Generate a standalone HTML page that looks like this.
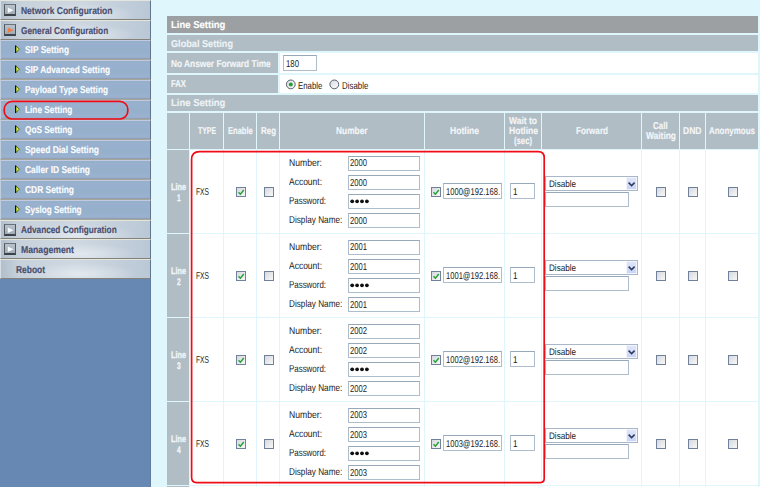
<!DOCTYPE html><html><head><meta charset="utf-8"><style>
*{box-sizing:border-box}
body{margin:0;width:760px;height:487px;overflow:hidden;position:relative;background:#dff6fc;font-family:"Liberation Sans",sans-serif}
.ab{position:absolute}
.cat{position:absolute;left:0;width:151px;height:20px;
 background:radial-gradient(ellipse 55px 11px at 80px 14px,rgba(230,236,242,.8),rgba(230,236,242,0)),linear-gradient(to right,#b2bfcc 0%,#c6d1db 12%,#cfd8e1 50%,#bac8d6 100%);
 border-bottom:1px solid #85827a;border-top:1px solid #e2e6dc;border-right:1px solid #62758d;border-left:1px solid #d8dee6}
.sub{position:absolute;left:0;width:151px;height:20px;background:linear-gradient(to bottom,#8fb2c6 0%,#9ab0cf 12%,#95b0cb 50%,#9ab2d0 90%,#8e9aac 100%);
 border-bottom:1px solid #a6a696;border-top:1px solid #c4c8e2;border-right:1px solid #62758d;border-left:1px solid #c0cede}
.t{position:absolute;white-space:nowrap;transform-origin:0 0;line-height:10px;text-rendering:geometricPrecision}
.ico{position:absolute;left:3px;top:3px;width:12px;height:12px;border:1px solid #4e565e;border-bottom:2px solid #3c434a;border-top-color:#6a727c;background:linear-gradient(#b8c2cc,#a2acb8)}
.cell{position:absolute;overflow:hidden}
.g{background:#b1bdc5}
.w{background:#fff}
.inp{position:absolute;background:#fff;border:1px solid #aebdcb;border-top-color:#97a8b8}
.cb{position:absolute;width:10px;height:10px;border:1px solid #71819b;background:linear-gradient(135deg,#d6dade,#f6f7f8)}
</style></head><body>

<div class="ab" style="left:0;top:0;width:151px;height:487px;background:#6888b4;border-right:1px solid #5f7b9f"></div>
<div class="cat" style="top:0px;height:20px">
<div class="ico"><svg width="10" height="10" style="position:absolute;left:0;top:0"><path d="M2.8 2.6 L8.6 5.3 L2.8 8.1Z" fill="#f6f8fa"/></svg></div>
</div>
<div class="cat" style="top:20px;height:20px">
<div class="ico"><svg width="10" height="10" style="position:absolute;left:0;top:0"><path d="M2.8 2.6 L8.6 5.3 L2.8 8.1Z" fill="#ee7d48"/></svg></div>
</div>
<div class="sub" style="top:40px"><svg width="7" height="10" style="position:absolute;left:13px;top:3px"><path d="M1.6 1.7 L5.4 5.2 L1.6 8.7Z" fill="#d4ee30" stroke="#4a5a30" stroke-width="0.8" stroke-linejoin="round"/><path d="M1.6 1.5 L1.6 8.9" stroke="#101408" stroke-width="1.2"/></svg></div>
<div class="sub" style="top:60px"><svg width="7" height="10" style="position:absolute;left:13px;top:3px"><path d="M1.6 1.7 L5.4 5.2 L1.6 8.7Z" fill="#d4ee30" stroke="#4a5a30" stroke-width="0.8" stroke-linejoin="round"/><path d="M1.6 1.5 L1.6 8.9" stroke="#101408" stroke-width="1.2"/></svg></div>
<div class="sub" style="top:80px"><svg width="7" height="10" style="position:absolute;left:13px;top:3px"><path d="M1.6 1.7 L5.4 5.2 L1.6 8.7Z" fill="#d4ee30" stroke="#4a5a30" stroke-width="0.8" stroke-linejoin="round"/><path d="M1.6 1.5 L1.6 8.9" stroke="#101408" stroke-width="1.2"/></svg></div>
<div class="sub" style="top:100px"><svg width="7" height="10" style="position:absolute;left:13px;top:3px"><path d="M1.6 1.7 L5.4 5.2 L1.6 8.7Z" fill="#d4ee30" stroke="#4a5a30" stroke-width="0.8" stroke-linejoin="round"/><path d="M1.6 1.5 L1.6 8.9" stroke="#101408" stroke-width="1.2"/></svg></div>
<div class="sub" style="top:120px"><svg width="7" height="10" style="position:absolute;left:13px;top:3px"><path d="M1.6 1.7 L5.4 5.2 L1.6 8.7Z" fill="#d4ee30" stroke="#4a5a30" stroke-width="0.8" stroke-linejoin="round"/><path d="M1.6 1.5 L1.6 8.9" stroke="#101408" stroke-width="1.2"/></svg></div>
<div class="sub" style="top:140px"><svg width="7" height="10" style="position:absolute;left:13px;top:3px"><path d="M1.6 1.7 L5.4 5.2 L1.6 8.7Z" fill="#d4ee30" stroke="#4a5a30" stroke-width="0.8" stroke-linejoin="round"/><path d="M1.6 1.5 L1.6 8.9" stroke="#101408" stroke-width="1.2"/></svg></div>
<div class="sub" style="top:160px"><svg width="7" height="10" style="position:absolute;left:13px;top:3px"><path d="M1.6 1.7 L5.4 5.2 L1.6 8.7Z" fill="#d4ee30" stroke="#4a5a30" stroke-width="0.8" stroke-linejoin="round"/><path d="M1.6 1.5 L1.6 8.9" stroke="#101408" stroke-width="1.2"/></svg></div>
<div class="sub" style="top:180px"><svg width="7" height="10" style="position:absolute;left:13px;top:3px"><path d="M1.6 1.7 L5.4 5.2 L1.6 8.7Z" fill="#d4ee30" stroke="#4a5a30" stroke-width="0.8" stroke-linejoin="round"/><path d="M1.6 1.5 L1.6 8.9" stroke="#101408" stroke-width="1.2"/></svg></div>
<div class="sub" style="top:200px"><svg width="7" height="10" style="position:absolute;left:13px;top:3px"><path d="M1.6 1.7 L5.4 5.2 L1.6 8.7Z" fill="#d4ee30" stroke="#4a5a30" stroke-width="0.8" stroke-linejoin="round"/><path d="M1.6 1.5 L1.6 8.9" stroke="#101408" stroke-width="1.2"/></svg></div>
<div class="cat" style="top:220px;height:19px">
<div class="ico"><svg width="10" height="10" style="position:absolute;left:0;top:0"><path d="M2.8 2.6 L8.6 5.3 L2.8 8.1Z" fill="#f6f8fa"/></svg></div>
</div>
<div class="cat" style="top:239px;height:20px">
<div class="ico"><svg width="10" height="10" style="position:absolute;left:0;top:0"><path d="M2.8 2.6 L8.6 5.3 L2.8 8.1Z" fill="#f6f8fa"/></svg></div>
</div>
<div class="cat" style="top:259px;height:20px">
</div>
<svg class="ab" style="left:0;top:96px" width="140" height="28"><rect x="4.2" y="5.4" width="123.6" height="17.6" rx="8" ry="8" fill="none" stroke="#ee0c18" stroke-width="1.7"/></svg>
<div class="cell " style="left:167px;top:16px;width:591px;height:17px;background:#9ca0a3"></div>
<div class="cell g" style="left:167px;top:35px;width:591px;height:16px;"></div>
<div class="cell g" style="left:167px;top:53px;width:111px;height:20px;"></div>
<div class="cell w" style="left:280px;top:53px;width:478px;height:20px;"></div>
<div class="inp" style="left:283px;top:55px;width:34px;height:16px"></div>
<div class="cell g" style="left:167px;top:75px;width:111px;height:18px;"></div>
<div class="cell w" style="left:280px;top:75px;width:478px;height:18px;"></div>
<svg class="ab" style="left:285px;top:79px" width="12" height="12"><defs><linearGradient id="rg" x1="0" y1="0" x2="1" y2="1"><stop offset="0" stop-color="#d8dde2"/><stop offset="1" stop-color="#fafbfc"/></linearGradient></defs><circle cx="5.8" cy="5.4" r="4.4" fill="url(#rg)" stroke="#56606c" stroke-width="1"/><circle cx="5.8" cy="5.4" r="2" fill="#22a032"/></svg>
<svg class="ab" style="left:329px;top:79px" width="12" height="12"><circle cx="5.3" cy="5.4" r="4.4" fill="url(#rg)" stroke="#56606c" stroke-width="1"/></svg>
<div class="cell g" style="left:167px;top:95px;width:591px;height:16px;"></div>
<div class="cell g" style="left:167px;top:113px;width:22px;height:36px;"></div>
<div class="cell g" style="left:190px;top:113px;width:33px;height:36px;"></div>
<div class="cell g" style="left:224px;top:113px;width:32px;height:36px;"></div>
<div class="cell g" style="left:257px;top:113px;width:22px;height:36px;"></div>
<div class="cell g" style="left:280px;top:113px;width:144px;height:36px;"></div>
<div class="cell g" style="left:425px;top:113px;width:79px;height:36px;"></div>
<div class="cell g" style="left:505px;top:113px;width:36px;height:36px;"></div>
<div class="cell g" style="left:542px;top:113px;width:99px;height:36px;"></div>
<div class="cell g" style="left:642px;top:113px;width:37px;height:36px;"></div>
<div class="cell g" style="left:680px;top:113px;width:25px;height:36px;"></div>
<div class="cell g" style="left:706px;top:113px;width:52px;height:36px;"></div>
<div class="cell g" style="left:167px;top:150px;width:22px;height:83px;"></div>
<div class="cell w" style="left:190px;top:150px;width:33px;height:83px;"></div>
<div class="cell w" style="left:224px;top:150px;width:32px;height:83px;"></div>
<div class="cell w" style="left:257px;top:150px;width:22px;height:83px;"></div>
<div class="cell w" style="left:280px;top:150px;width:144px;height:83px;"></div>
<div class="cell w" style="left:425px;top:150px;width:79px;height:83px;"></div>
<div class="cell w" style="left:505px;top:150px;width:36px;height:83px;"></div>
<div class="cell w" style="left:542px;top:150px;width:99px;height:83px;"></div>
<div class="cell w" style="left:642px;top:150px;width:37px;height:83px;"></div>
<div class="cell w" style="left:680px;top:150px;width:25px;height:83px;"></div>
<div class="cell w" style="left:706px;top:150px;width:52px;height:83px;"></div>
<div class="cb" style="left:236px;top:187px"><svg width="8" height="8" style="position:absolute;left:0;top:0"><path d="M1.5 4.3 L3.4 6.2 L6.8 2" fill="none" stroke="#22a02e" stroke-width="1.4"/></svg></div>
<div class="cb" style="left:264px;top:187px"></div>
<div class="inp" style="left:348px;top:156px;width:72px;height:15px"></div>
<div class="inp" style="left:348px;top:175px;width:72px;height:15px"></div>
<div class="inp" style="left:348px;top:194px;width:72px;height:15px"></div>
<svg class="ab" style="left:350px;top:198px" width="22" height="7"><circle cx="2.2" cy="3.3" r="1.9" fill="#111"/><circle cx="7.1000000000000005" cy="3.3" r="1.9" fill="#111"/><circle cx="12.0" cy="3.3" r="1.9" fill="#111"/><circle cx="16.900000000000002" cy="3.3" r="1.9" fill="#111"/></svg>
<div class="inp" style="left:348px;top:213px;width:72px;height:15px"></div>
<div class="cb" style="left:431px;top:187px"><svg width="8" height="8" style="position:absolute;left:0;top:0"><path d="M1.5 4.3 L3.4 6.2 L6.8 2" fill="none" stroke="#22a02e" stroke-width="1.4"/></svg></div>
<div class="inp" style="left:443px;top:183px;width:59px;height:16px"></div>
<div class="inp" style="left:510px;top:183px;width:25px;height:16px"></div>
<div class="inp" style="left:545px;top:176px;width:93px;height:15px;border-color:#a9b8c8"><div style="position:absolute;right:0;top:0;width:11px;height:13px;background:linear-gradient(#dfe5fb,#c9d5f5);border:1px solid #f2f5fc"><svg width="11" height="13" style="position:absolute;left:0;top:0"><path d="M1.6 4.6 L4.6 7.6 L7.6 4.6" fill="none" stroke="#2c3a5c" stroke-width="1.5"/></svg></div></div>
<div class="inp" style="left:545px;top:192px;width:84px;height:15px"></div>
<div class="cb" style="left:656px;top:187px"></div>
<div class="cb" style="left:688px;top:187px"></div>
<div class="cb" style="left:728px;top:187px"></div>
<div class="cell g" style="left:167px;top:234px;width:22px;height:83px;"></div>
<div class="cell w" style="left:190px;top:234px;width:33px;height:83px;"></div>
<div class="cell w" style="left:224px;top:234px;width:32px;height:83px;"></div>
<div class="cell w" style="left:257px;top:234px;width:22px;height:83px;"></div>
<div class="cell w" style="left:280px;top:234px;width:144px;height:83px;"></div>
<div class="cell w" style="left:425px;top:234px;width:79px;height:83px;"></div>
<div class="cell w" style="left:505px;top:234px;width:36px;height:83px;"></div>
<div class="cell w" style="left:542px;top:234px;width:99px;height:83px;"></div>
<div class="cell w" style="left:642px;top:234px;width:37px;height:83px;"></div>
<div class="cell w" style="left:680px;top:234px;width:25px;height:83px;"></div>
<div class="cell w" style="left:706px;top:234px;width:52px;height:83px;"></div>
<div class="cb" style="left:236px;top:271px"><svg width="8" height="8" style="position:absolute;left:0;top:0"><path d="M1.5 4.3 L3.4 6.2 L6.8 2" fill="none" stroke="#22a02e" stroke-width="1.4"/></svg></div>
<div class="cb" style="left:264px;top:271px"></div>
<div class="inp" style="left:348px;top:240px;width:72px;height:15px"></div>
<div class="inp" style="left:348px;top:259px;width:72px;height:15px"></div>
<div class="inp" style="left:348px;top:278px;width:72px;height:15px"></div>
<svg class="ab" style="left:350px;top:282px" width="22" height="7"><circle cx="2.2" cy="3.3" r="1.9" fill="#111"/><circle cx="7.1000000000000005" cy="3.3" r="1.9" fill="#111"/><circle cx="12.0" cy="3.3" r="1.9" fill="#111"/><circle cx="16.900000000000002" cy="3.3" r="1.9" fill="#111"/></svg>
<div class="inp" style="left:348px;top:297px;width:72px;height:15px"></div>
<div class="cb" style="left:431px;top:271px"><svg width="8" height="8" style="position:absolute;left:0;top:0"><path d="M1.5 4.3 L3.4 6.2 L6.8 2" fill="none" stroke="#22a02e" stroke-width="1.4"/></svg></div>
<div class="inp" style="left:443px;top:267px;width:59px;height:16px"></div>
<div class="inp" style="left:510px;top:267px;width:25px;height:16px"></div>
<div class="inp" style="left:545px;top:260px;width:93px;height:15px;border-color:#a9b8c8"><div style="position:absolute;right:0;top:0;width:11px;height:13px;background:linear-gradient(#dfe5fb,#c9d5f5);border:1px solid #f2f5fc"><svg width="11" height="13" style="position:absolute;left:0;top:0"><path d="M1.6 4.6 L4.6 7.6 L7.6 4.6" fill="none" stroke="#2c3a5c" stroke-width="1.5"/></svg></div></div>
<div class="inp" style="left:545px;top:276px;width:84px;height:15px"></div>
<div class="cb" style="left:656px;top:271px"></div>
<div class="cb" style="left:688px;top:271px"></div>
<div class="cb" style="left:728px;top:271px"></div>
<div class="cell g" style="left:167px;top:318px;width:22px;height:83px;"></div>
<div class="cell w" style="left:190px;top:318px;width:33px;height:83px;"></div>
<div class="cell w" style="left:224px;top:318px;width:32px;height:83px;"></div>
<div class="cell w" style="left:257px;top:318px;width:22px;height:83px;"></div>
<div class="cell w" style="left:280px;top:318px;width:144px;height:83px;"></div>
<div class="cell w" style="left:425px;top:318px;width:79px;height:83px;"></div>
<div class="cell w" style="left:505px;top:318px;width:36px;height:83px;"></div>
<div class="cell w" style="left:542px;top:318px;width:99px;height:83px;"></div>
<div class="cell w" style="left:642px;top:318px;width:37px;height:83px;"></div>
<div class="cell w" style="left:680px;top:318px;width:25px;height:83px;"></div>
<div class="cell w" style="left:706px;top:318px;width:52px;height:83px;"></div>
<div class="cb" style="left:236px;top:355px"><svg width="8" height="8" style="position:absolute;left:0;top:0"><path d="M1.5 4.3 L3.4 6.2 L6.8 2" fill="none" stroke="#22a02e" stroke-width="1.4"/></svg></div>
<div class="cb" style="left:264px;top:355px"></div>
<div class="inp" style="left:348px;top:324px;width:72px;height:15px"></div>
<div class="inp" style="left:348px;top:343px;width:72px;height:15px"></div>
<div class="inp" style="left:348px;top:362px;width:72px;height:15px"></div>
<svg class="ab" style="left:350px;top:366px" width="22" height="7"><circle cx="2.2" cy="3.3" r="1.9" fill="#111"/><circle cx="7.1000000000000005" cy="3.3" r="1.9" fill="#111"/><circle cx="12.0" cy="3.3" r="1.9" fill="#111"/><circle cx="16.900000000000002" cy="3.3" r="1.9" fill="#111"/></svg>
<div class="inp" style="left:348px;top:381px;width:72px;height:15px"></div>
<div class="cb" style="left:431px;top:355px"><svg width="8" height="8" style="position:absolute;left:0;top:0"><path d="M1.5 4.3 L3.4 6.2 L6.8 2" fill="none" stroke="#22a02e" stroke-width="1.4"/></svg></div>
<div class="inp" style="left:443px;top:351px;width:59px;height:16px"></div>
<div class="inp" style="left:510px;top:351px;width:25px;height:16px"></div>
<div class="inp" style="left:545px;top:344px;width:93px;height:15px;border-color:#a9b8c8"><div style="position:absolute;right:0;top:0;width:11px;height:13px;background:linear-gradient(#dfe5fb,#c9d5f5);border:1px solid #f2f5fc"><svg width="11" height="13" style="position:absolute;left:0;top:0"><path d="M1.6 4.6 L4.6 7.6 L7.6 4.6" fill="none" stroke="#2c3a5c" stroke-width="1.5"/></svg></div></div>
<div class="inp" style="left:545px;top:360px;width:84px;height:15px"></div>
<div class="cb" style="left:656px;top:355px"></div>
<div class="cb" style="left:688px;top:355px"></div>
<div class="cb" style="left:728px;top:355px"></div>
<div class="cell g" style="left:167px;top:402px;width:22px;height:83px;"></div>
<div class="cell w" style="left:190px;top:402px;width:33px;height:83px;"></div>
<div class="cell w" style="left:224px;top:402px;width:32px;height:83px;"></div>
<div class="cell w" style="left:257px;top:402px;width:22px;height:83px;"></div>
<div class="cell w" style="left:280px;top:402px;width:144px;height:83px;"></div>
<div class="cell w" style="left:425px;top:402px;width:79px;height:83px;"></div>
<div class="cell w" style="left:505px;top:402px;width:36px;height:83px;"></div>
<div class="cell w" style="left:542px;top:402px;width:99px;height:83px;"></div>
<div class="cell w" style="left:642px;top:402px;width:37px;height:83px;"></div>
<div class="cell w" style="left:680px;top:402px;width:25px;height:83px;"></div>
<div class="cell w" style="left:706px;top:402px;width:52px;height:83px;"></div>
<div class="cb" style="left:236px;top:439px"><svg width="8" height="8" style="position:absolute;left:0;top:0"><path d="M1.5 4.3 L3.4 6.2 L6.8 2" fill="none" stroke="#22a02e" stroke-width="1.4"/></svg></div>
<div class="cb" style="left:264px;top:439px"></div>
<div class="inp" style="left:348px;top:408px;width:72px;height:15px"></div>
<div class="inp" style="left:348px;top:427px;width:72px;height:15px"></div>
<div class="inp" style="left:348px;top:446px;width:72px;height:15px"></div>
<svg class="ab" style="left:350px;top:450px" width="22" height="7"><circle cx="2.2" cy="3.3" r="1.9" fill="#111"/><circle cx="7.1000000000000005" cy="3.3" r="1.9" fill="#111"/><circle cx="12.0" cy="3.3" r="1.9" fill="#111"/><circle cx="16.900000000000002" cy="3.3" r="1.9" fill="#111"/></svg>
<div class="inp" style="left:348px;top:465px;width:72px;height:15px"></div>
<div class="cb" style="left:431px;top:439px"><svg width="8" height="8" style="position:absolute;left:0;top:0"><path d="M1.5 4.3 L3.4 6.2 L6.8 2" fill="none" stroke="#22a02e" stroke-width="1.4"/></svg></div>
<div class="inp" style="left:443px;top:435px;width:59px;height:16px"></div>
<div class="inp" style="left:510px;top:435px;width:25px;height:16px"></div>
<div class="inp" style="left:545px;top:428px;width:93px;height:15px;border-color:#a9b8c8"><div style="position:absolute;right:0;top:0;width:11px;height:13px;background:linear-gradient(#dfe5fb,#c9d5f5);border:1px solid #f2f5fc"><svg width="11" height="13" style="position:absolute;left:0;top:0"><path d="M1.6 4.6 L4.6 7.6 L7.6 4.6" fill="none" stroke="#2c3a5c" stroke-width="1.5"/></svg></div></div>
<div class="inp" style="left:545px;top:444px;width:84px;height:15px"></div>
<div class="cb" style="left:656px;top:439px"></div>
<div class="cb" style="left:688px;top:439px"></div>
<div class="cb" style="left:728px;top:439px"></div>
<div class="cell g" style="left:167px;top:486px;width:22px;height:21px;"></div>
<div class="cell w" style="left:190px;top:486px;width:33px;height:21px;"></div>
<div class="cell w" style="left:224px;top:486px;width:32px;height:21px;"></div>
<div class="cell w" style="left:257px;top:486px;width:22px;height:21px;"></div>
<div class="cell w" style="left:280px;top:486px;width:144px;height:21px;"></div>
<div class="cell w" style="left:425px;top:486px;width:79px;height:21px;"></div>
<div class="cell w" style="left:505px;top:486px;width:36px;height:21px;"></div>
<div class="cell w" style="left:542px;top:486px;width:99px;height:21px;"></div>
<div class="cell w" style="left:642px;top:486px;width:37px;height:21px;"></div>
<div class="cell w" style="left:680px;top:486px;width:25px;height:21px;"></div>
<div class="cell w" style="left:706px;top:486px;width:52px;height:21px;"></div>
<svg class="ab" style="left:0;top:0" width="760" height="487"><path d="M199.6 151.6 L538.2 151.6 Q544.2 151.6 544.2 157.6 L544.2 478.6 Q544.2 482.6 540.2 482.6 L196.6 482.6 Q191.6 482.6 191.6 477.6 L191.6 159.6 Q191.6 151.6 199.6 151.6Z" fill="none" stroke="#f00c16" stroke-width="1.7"/></svg>
<div class="t" style="left:21.00px;top:6.69px;font-size:10px;font-weight:bold;color:#4a4e70;transform:scale(0.8480,1.0);-webkit-text-stroke:0.15px #4a4e70">Network Configuration</div>
<div class="t" style="left:21.00px;top:26.69px;font-size:10px;font-weight:bold;color:#4a4e70;transform:scale(0.8261,1.0);-webkit-text-stroke:0.15px #4a4e70">General Configuration</div>
<div class="t" style="left:25.00px;top:46.19px;font-size:10px;font-weight:bold;color:#fbfcfe;transform:scale(0.8364,1.0);-webkit-text-stroke:0.15px #fbfcfe">SIP Setting</div>
<div class="t" style="left:25.00px;top:66.19px;font-size:10px;font-weight:bold;color:#fbfcfe;transform:scale(0.8267,1.0);-webkit-text-stroke:0.15px #fbfcfe">SIP Advanced Setting</div>
<div class="t" style="left:25.00px;top:86.19px;font-size:10px;font-weight:bold;color:#fbfcfe;transform:scale(0.8268,1.0);-webkit-text-stroke:0.15px #fbfcfe">Payload Type Setting</div>
<div class="t" style="left:25.00px;top:106.19px;font-size:10px;font-weight:bold;color:#fbfcfe;transform:scale(0.8264,1.0);-webkit-text-stroke:0.15px #fbfcfe">Line Setting</div>
<div class="t" style="left:25.00px;top:126.19px;font-size:10px;font-weight:bold;color:#fbfcfe;transform:scale(0.8282,1.0);-webkit-text-stroke:0.15px #fbfcfe">QoS Setting</div>
<div class="t" style="left:25.00px;top:146.19px;font-size:10px;font-weight:bold;color:#fbfcfe;transform:scale(0.8429,1.0);-webkit-text-stroke:0.15px #fbfcfe">Speed Dial Setting</div>
<div class="t" style="left:25.00px;top:166.19px;font-size:10px;font-weight:bold;color:#fbfcfe;transform:scale(0.8414,1.0);-webkit-text-stroke:0.15px #fbfcfe">Caller ID Setting</div>
<div class="t" style="left:25.00px;top:186.19px;font-size:10px;font-weight:bold;color:#fbfcfe;transform:scale(0.8399,1.0);-webkit-text-stroke:0.15px #fbfcfe">CDR Setting</div>
<div class="t" style="left:25.00px;top:206.19px;font-size:10px;font-weight:bold;color:#fbfcfe;transform:scale(0.8149,1.0);-webkit-text-stroke:0.15px #fbfcfe">Syslog Setting</div>
<div class="t" style="left:21.00px;top:226.09px;font-size:10px;font-weight:bold;color:#4a4e70;transform:scale(0.8241,1.0);-webkit-text-stroke:0.15px #4a4e70">Advanced Configuration</div>
<div class="t" style="left:21.00px;top:245.69px;font-size:10px;font-weight:bold;color:#4a4e70;transform:scale(0.8671,1.0);-webkit-text-stroke:0.15px #4a4e70">Management</div>
<div class="t" style="left:16.00px;top:265.69px;font-size:10px;font-weight:bold;color:#4a4e70;transform:scale(0.8417,1.0);-webkit-text-stroke:0.15px #4a4e70">Reboot</div>
<div class="t" style="left:171.00px;top:21.39px;font-size:10px;font-weight:bold;color:#ffffff;transform:scale(0.9505,1.0);-webkit-text-stroke:0.15px #ffffff">Line Setting</div>
<div class="t" style="left:170.50px;top:39.69px;font-size:10px;font-weight:bold;color:#edf3f6;transform:scale(0.9147,1.0);-webkit-text-stroke:0.15px #edf3f6">Global Setting</div>
<div class="t" style="left:171.00px;top:59.69px;font-size:10px;font-weight:bold;color:#f2f6f8;transform:scale(0.8306,1.0);-webkit-text-stroke:0.15px #f2f6f8">No Answer Forward Time</div>
<div class="t" style="left:285.50px;top:60.07px;font-size:10px;font-weight:normal;color:#1a1a1a;transform:scale(0.7790,1.0);-webkit-text-stroke:0 #1a1a1a">180</div>
<div class="t" style="left:171.00px;top:80.29px;font-size:10px;font-weight:bold;color:#f2f6f8;transform:scale(0.7711,1.0);-webkit-text-stroke:0.15px #f2f6f8">FAX</div>
<div class="t" style="left:297.70px;top:81.57px;font-size:10px;font-weight:normal;color:#222;transform:scale(0.7803,1.0);-webkit-text-stroke:0 #222">Enable</div>
<div class="t" style="left:341.80px;top:81.57px;font-size:10px;font-weight:normal;color:#222;transform:scale(0.7884,1.0);-webkit-text-stroke:0 #222">Disable</div>
<div class="t" style="left:170.50px;top:99.19px;font-size:10px;font-weight:bold;color:#edf3f6;transform:scale(0.9505,1.0);-webkit-text-stroke:0.15px #edf3f6">Line Setting</div>
<div class="t" style="left:197.50px;top:127.19px;font-size:10px;font-weight:bold;color:#f4f7f9;transform:scale(0.6890,1.0);-webkit-text-stroke:0.15px #f4f7f9">TYPE</div>
<div class="t" style="left:227.60px;top:127.19px;font-size:10px;font-weight:bold;color:#f4f7f9;transform:scale(0.7562,1.0);-webkit-text-stroke:0.15px #f4f7f9">Enable</div>
<div class="t" style="left:260.50px;top:127.19px;font-size:10px;font-weight:bold;color:#f4f7f9;transform:scale(0.7934,1.0);-webkit-text-stroke:0.15px #f4f7f9">Reg</div>
<div class="t" style="left:336.20px;top:127.19px;font-size:10px;font-weight:bold;color:#f4f7f9;transform:scale(0.8360,1.0);-webkit-text-stroke:0.15px #f4f7f9">Number</div>
<div class="t" style="left:450.00px;top:127.19px;font-size:10px;font-weight:bold;color:#f4f7f9;transform:scale(0.8557,1.0);-webkit-text-stroke:0.15px #f4f7f9">Hotline</div>
<div class="t" style="left:509.00px;top:116.69px;font-size:10px;font-weight:bold;color:#f4f7f9;transform:scale(0.8493,1.0);-webkit-text-stroke:0.15px #f4f7f9">Wait to</div>
<div class="t" style="left:508.50px;top:127.19px;font-size:10px;font-weight:bold;color:#f4f7f9;transform:scale(0.8557,1.0);-webkit-text-stroke:0.15px #f4f7f9">Hotline</div>
<div class="t" style="left:514.00px;top:137.19px;font-size:10px;font-weight:bold;color:#f4f7f9;transform:scale(0.7706,1.0);-webkit-text-stroke:0.15px #f4f7f9">(sec)</div>
<div class="t" style="left:575.50px;top:127.19px;font-size:10px;font-weight:bold;color:#f4f7f9;transform:scale(0.8111,1.0);-webkit-text-stroke:0.15px #f4f7f9">Forward</div>
<div class="t" style="left:653.20px;top:121.69px;font-size:10px;font-weight:bold;color:#f4f7f9;transform:scale(0.7959,1.0);-webkit-text-stroke:0.15px #f4f7f9">Call</div>
<div class="t" style="left:645.50px;top:132.19px;font-size:10px;font-weight:bold;color:#f4f7f9;transform:scale(0.8395,1.0);-webkit-text-stroke:0.15px #f4f7f9">Waiting</div>
<div class="t" style="left:683.30px;top:127.19px;font-size:10px;font-weight:bold;color:#f4f7f9;transform:scale(0.8490,1.0);-webkit-text-stroke:0.15px #f4f7f9">DND</div>
<div class="t" style="left:709.00px;top:127.19px;font-size:10px;font-weight:bold;color:#f4f7f9;transform:scale(0.7961,1.0);-webkit-text-stroke:0.15px #f4f7f9">Anonymous</div>
<div class="t" style="left:171.00px;top:183.30px;font-size:9.5px;font-weight:bold;color:#f2f6f8;transform:scale(0.7680,1.0);-webkit-text-stroke:0.15px #f2f6f8;-webkit-text-stroke:0.3px #f2f6f8">Line</div>
<div class="t" style="left:176.60px;top:193.50px;font-size:9.5px;font-weight:bold;color:#f2f6f8;transform:scale(0.6985,1.0);-webkit-text-stroke:0.15px #f2f6f8;-webkit-text-stroke:0.3px #f2f6f8">1</div>
<div class="t" style="left:195.50px;top:188.07px;font-size:10px;font-weight:normal;color:#222;transform:scale(0.6683,1.0);-webkit-text-stroke:0 #222">FXS</div>
<div class="t" style="left:289.00px;top:159.07px;font-size:10px;font-weight:normal;color:#1c1c1c;transform:scale(0.8603,1.0);-webkit-text-stroke:0 #1c1c1c">Number:</div>
<div class="t" style="left:350.00px;top:159.47px;font-size:10px;font-weight:normal;color:#1a1a1a;transform:scale(0.7640,1.0);-webkit-text-stroke:0 #1a1a1a">2000</div>
<div class="t" style="left:289.00px;top:178.17px;font-size:10px;font-weight:normal;color:#1c1c1c;transform:scale(0.8479,1.0);-webkit-text-stroke:0 #1c1c1c">Account:</div>
<div class="t" style="left:350.00px;top:178.57px;font-size:10px;font-weight:normal;color:#1a1a1a;transform:scale(0.7640,1.0);-webkit-text-stroke:0 #1a1a1a">2000</div>
<div class="t" style="left:289.00px;top:197.27px;font-size:10px;font-weight:normal;color:#1c1c1c;transform:scale(0.7925,1.0);-webkit-text-stroke:0 #1c1c1c">Password:</div>
<div class="t" style="left:289.00px;top:216.37px;font-size:10px;font-weight:normal;color:#1c1c1c;transform:scale(0.8196,1.0);-webkit-text-stroke:0 #1c1c1c">Display Name:</div>
<div class="t" style="left:350.00px;top:216.77px;font-size:10px;font-weight:normal;color:#1a1a1a;transform:scale(0.7640,1.0);-webkit-text-stroke:0 #1a1a1a">2000</div>
<div class="t" style="left:445.50px;top:187.77px;font-size:10px;font-weight:normal;color:#1a1a1a;transform:scale(0.7571,1.0);-webkit-text-stroke:0 #1a1a1a">1000@192.168.</div>
<div class="t" style="left:513.00px;top:187.77px;font-size:10px;font-weight:normal;color:#1a1a1a;transform:scale(0.8090,1.0);-webkit-text-stroke:0 #1a1a1a">1</div>
<div class="t" style="left:548.70px;top:180.16px;font-size:9.5px;font-weight:normal;color:#1a1a1a;transform:scale(0.8521,1.0);-webkit-text-stroke:0 #1a1a1a">Disable</div>
<div class="t" style="left:171.00px;top:267.30px;font-size:9.5px;font-weight:bold;color:#f2f6f8;transform:scale(0.7680,1.0);-webkit-text-stroke:0.15px #f2f6f8;-webkit-text-stroke:0.3px #f2f6f8">Line</div>
<div class="t" style="left:176.60px;top:277.50px;font-size:9.5px;font-weight:bold;color:#f2f6f8;transform:scale(0.6985,1.0);-webkit-text-stroke:0.15px #f2f6f8;-webkit-text-stroke:0.3px #f2f6f8">2</div>
<div class="t" style="left:195.50px;top:272.07px;font-size:10px;font-weight:normal;color:#222;transform:scale(0.6683,1.0);-webkit-text-stroke:0 #222">FXS</div>
<div class="t" style="left:289.00px;top:243.07px;font-size:10px;font-weight:normal;color:#1c1c1c;transform:scale(0.8603,1.0);-webkit-text-stroke:0 #1c1c1c">Number:</div>
<div class="t" style="left:350.00px;top:243.47px;font-size:10px;font-weight:normal;color:#1a1a1a;transform:scale(0.7640,1.0);-webkit-text-stroke:0 #1a1a1a">2001</div>
<div class="t" style="left:289.00px;top:262.17px;font-size:10px;font-weight:normal;color:#1c1c1c;transform:scale(0.8479,1.0);-webkit-text-stroke:0 #1c1c1c">Account:</div>
<div class="t" style="left:350.00px;top:262.57px;font-size:10px;font-weight:normal;color:#1a1a1a;transform:scale(0.7640,1.0);-webkit-text-stroke:0 #1a1a1a">2001</div>
<div class="t" style="left:289.00px;top:281.27px;font-size:10px;font-weight:normal;color:#1c1c1c;transform:scale(0.7925,1.0);-webkit-text-stroke:0 #1c1c1c">Password:</div>
<div class="t" style="left:289.00px;top:300.37px;font-size:10px;font-weight:normal;color:#1c1c1c;transform:scale(0.8196,1.0);-webkit-text-stroke:0 #1c1c1c">Display Name:</div>
<div class="t" style="left:350.00px;top:300.77px;font-size:10px;font-weight:normal;color:#1a1a1a;transform:scale(0.7640,1.0);-webkit-text-stroke:0 #1a1a1a">2001</div>
<div class="t" style="left:445.50px;top:271.77px;font-size:10px;font-weight:normal;color:#1a1a1a;transform:scale(0.7571,1.0);-webkit-text-stroke:0 #1a1a1a">1001@192.168.</div>
<div class="t" style="left:513.00px;top:271.77px;font-size:10px;font-weight:normal;color:#1a1a1a;transform:scale(0.8090,1.0);-webkit-text-stroke:0 #1a1a1a">1</div>
<div class="t" style="left:548.70px;top:264.16px;font-size:9.5px;font-weight:normal;color:#1a1a1a;transform:scale(0.8521,1.0);-webkit-text-stroke:0 #1a1a1a">Disable</div>
<div class="t" style="left:171.00px;top:351.30px;font-size:9.5px;font-weight:bold;color:#f2f6f8;transform:scale(0.7680,1.0);-webkit-text-stroke:0.15px #f2f6f8;-webkit-text-stroke:0.3px #f2f6f8">Line</div>
<div class="t" style="left:176.60px;top:361.50px;font-size:9.5px;font-weight:bold;color:#f2f6f8;transform:scale(0.6985,1.0);-webkit-text-stroke:0.15px #f2f6f8;-webkit-text-stroke:0.3px #f2f6f8">3</div>
<div class="t" style="left:195.50px;top:356.07px;font-size:10px;font-weight:normal;color:#222;transform:scale(0.6683,1.0);-webkit-text-stroke:0 #222">FXS</div>
<div class="t" style="left:289.00px;top:327.07px;font-size:10px;font-weight:normal;color:#1c1c1c;transform:scale(0.8603,1.0);-webkit-text-stroke:0 #1c1c1c">Number:</div>
<div class="t" style="left:350.00px;top:327.47px;font-size:10px;font-weight:normal;color:#1a1a1a;transform:scale(0.7640,1.0);-webkit-text-stroke:0 #1a1a1a">2002</div>
<div class="t" style="left:289.00px;top:346.17px;font-size:10px;font-weight:normal;color:#1c1c1c;transform:scale(0.8479,1.0);-webkit-text-stroke:0 #1c1c1c">Account:</div>
<div class="t" style="left:350.00px;top:346.57px;font-size:10px;font-weight:normal;color:#1a1a1a;transform:scale(0.7640,1.0);-webkit-text-stroke:0 #1a1a1a">2002</div>
<div class="t" style="left:289.00px;top:365.27px;font-size:10px;font-weight:normal;color:#1c1c1c;transform:scale(0.7925,1.0);-webkit-text-stroke:0 #1c1c1c">Password:</div>
<div class="t" style="left:289.00px;top:384.37px;font-size:10px;font-weight:normal;color:#1c1c1c;transform:scale(0.8196,1.0);-webkit-text-stroke:0 #1c1c1c">Display Name:</div>
<div class="t" style="left:350.00px;top:384.77px;font-size:10px;font-weight:normal;color:#1a1a1a;transform:scale(0.7640,1.0);-webkit-text-stroke:0 #1a1a1a">2002</div>
<div class="t" style="left:445.50px;top:355.77px;font-size:10px;font-weight:normal;color:#1a1a1a;transform:scale(0.7571,1.0);-webkit-text-stroke:0 #1a1a1a">1002@192.168.</div>
<div class="t" style="left:513.00px;top:355.77px;font-size:10px;font-weight:normal;color:#1a1a1a;transform:scale(0.8090,1.0);-webkit-text-stroke:0 #1a1a1a">1</div>
<div class="t" style="left:548.70px;top:348.16px;font-size:9.5px;font-weight:normal;color:#1a1a1a;transform:scale(0.8521,1.0);-webkit-text-stroke:0 #1a1a1a">Disable</div>
<div class="t" style="left:171.00px;top:435.30px;font-size:9.5px;font-weight:bold;color:#f2f6f8;transform:scale(0.7680,1.0);-webkit-text-stroke:0.15px #f2f6f8;-webkit-text-stroke:0.3px #f2f6f8">Line</div>
<div class="t" style="left:176.60px;top:445.50px;font-size:9.5px;font-weight:bold;color:#f2f6f8;transform:scale(0.6985,1.0);-webkit-text-stroke:0.15px #f2f6f8;-webkit-text-stroke:0.3px #f2f6f8">4</div>
<div class="t" style="left:195.50px;top:440.07px;font-size:10px;font-weight:normal;color:#222;transform:scale(0.6683,1.0);-webkit-text-stroke:0 #222">FXS</div>
<div class="t" style="left:289.00px;top:411.07px;font-size:10px;font-weight:normal;color:#1c1c1c;transform:scale(0.8603,1.0);-webkit-text-stroke:0 #1c1c1c">Number:</div>
<div class="t" style="left:350.00px;top:411.47px;font-size:10px;font-weight:normal;color:#1a1a1a;transform:scale(0.7640,1.0);-webkit-text-stroke:0 #1a1a1a">2003</div>
<div class="t" style="left:289.00px;top:430.17px;font-size:10px;font-weight:normal;color:#1c1c1c;transform:scale(0.8479,1.0);-webkit-text-stroke:0 #1c1c1c">Account:</div>
<div class="t" style="left:350.00px;top:430.57px;font-size:10px;font-weight:normal;color:#1a1a1a;transform:scale(0.7640,1.0);-webkit-text-stroke:0 #1a1a1a">2003</div>
<div class="t" style="left:289.00px;top:449.27px;font-size:10px;font-weight:normal;color:#1c1c1c;transform:scale(0.7925,1.0);-webkit-text-stroke:0 #1c1c1c">Password:</div>
<div class="t" style="left:289.00px;top:468.37px;font-size:10px;font-weight:normal;color:#1c1c1c;transform:scale(0.8196,1.0);-webkit-text-stroke:0 #1c1c1c">Display Name:</div>
<div class="t" style="left:350.00px;top:468.77px;font-size:10px;font-weight:normal;color:#1a1a1a;transform:scale(0.7640,1.0);-webkit-text-stroke:0 #1a1a1a">2003</div>
<div class="t" style="left:445.50px;top:439.77px;font-size:10px;font-weight:normal;color:#1a1a1a;transform:scale(0.7571,1.0);-webkit-text-stroke:0 #1a1a1a">1003@192.168.</div>
<div class="t" style="left:513.00px;top:439.77px;font-size:10px;font-weight:normal;color:#1a1a1a;transform:scale(0.8090,1.0);-webkit-text-stroke:0 #1a1a1a">1</div>
<div class="t" style="left:548.70px;top:432.16px;font-size:9.5px;font-weight:normal;color:#1a1a1a;transform:scale(0.8521,1.0);-webkit-text-stroke:0 #1a1a1a">Disable</div>
</body></html>
